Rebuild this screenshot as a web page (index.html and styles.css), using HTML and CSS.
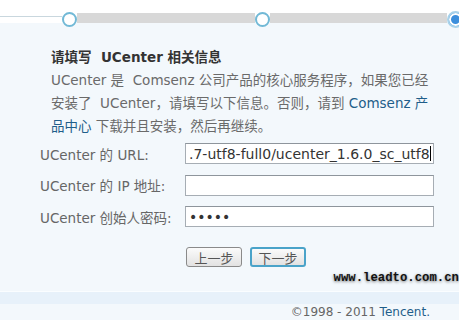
FILE: index.html
```html
<!DOCTYPE html>
<html lang="zh-CN">
<head>
<meta charset="utf-8">
<title>UCenter 设置</title>
<link rel="stylesheet" href="styles.css">
</head>
<body>
<div class="page">
  <div class="header">
    <div class="track">
      <span class="thin"></span>
      <span class="dot"></span>
      <span class="bar"></span>
      <span class="dot"></span>
      <span class="bar"></span>
      <span class="dot dot-current"></span>
    </div>
  </div>

  <div class="intro">
    <div class="title">请填写&nbsp; UCenter 相关信息</div>
    <div class="desc">UCenter 是&nbsp; Comsenz 公司产品的核心服务程序，如果您已经<br>安装了&nbsp; UCenter，请填写以下信息。否则，请到 <a class="link" href="#">Comsenz 产<br>品中心</a> 下载并且安装，然后再继续。</div>
  </div>

  <form class="form">
    <div class="row">
      <label class="label">UCenter 的 URL:</label>
      <div class="field"><input class="input" type="text" value=".7-utf8-full0/ucenter_1.6.0_sc_utf8"><span class="caret"></span></div>
    </div>
    <div class="row">
      <label class="label">UCenter 的 IP 地址:</label>
      <div class="field"><input class="input" type="text" value=""></div>
    </div>
    <div class="row">
      <label class="label">UCenter 创始人密码:</label>
      <div class="field"><input class="input" type="password" value="12345"></div>
    </div>
    <div class="buttons">
      <button class="btn" type="button">上一步</button>
      <button class="btn btn-focus" type="button">下一步</button>
    </div>
  </form>

  <div class="watermark">www.leadto.com.cn</div>

  <div class="footband"></div>
  <div class="footer">©1998 - 2011 <a class="link" href="#">Tencent.</a></div>
</div>
</body>
</html>
```

FILE: styles.css
```css
html, body {
  margin: 0;
  padding: 0;
}
body {
  background: #f3f8fc;
  font-family: "DejaVu Sans", "Noto Sans CJK SC", sans-serif;
  font-size: 13.5px;
  color: #666;
  width: 459px;
  height: 320px;
  overflow: hidden;
}
.page {
  display: flex;
  flex-direction: column;
}
.header {
  background: #fff;
  height: 23px;
  display: flex;
  flex-direction: column;
  justify-content: flex-end;
}
.track {
  height: 10px;
  display: flex;
  align-items: center;
}
.thin {
  width: 62px;
  height: 1px;
  background: #c9d7de;
  align-self: flex-start;
  margin-top: 3px;
  flex: none;
}
.dot {
  width: 11px;
  height: 11px;
  border: 2px solid #72b9d6;
  border-radius: 50%;
  background: #fff;
  flex: none;
  margin-top: 2px;
}
.bar {
  height: 10px;
  background: #d8d8d8;
  flex: none;
  width: 178px;
}
.bar + .dot + .bar {
  width: 177px;
}
.dot-current {
  width: 13px;
  height: 13px;
  background: #3d8fdc;
  border: 2px solid #a8d2ea;
  box-shadow: inset 0 0 0 2px #fff;
}
.intro {
  padding: 23px 0 0 51px;
  line-height: 23px;
}
.title {
  font-weight: bold;
  color: #333;
}
.desc {
  white-space: nowrap;
  color: #6a6a6a;
}
.link {
  color: #1f5e8a;
  text-decoration: none;
}
.form {
  margin: 5px 0 0 40px;
  display: flex;
  flex-direction: column;
  gap: 10.5px;
}
.row {
  display: flex;
  align-items: center;
  height: 21px;
}
.label {
  width: 145px;
  flex: none;
  white-space: nowrap;
}
.field {
  position: relative;
  width: 249px;
  height: 21px;
}
.input {
  box-sizing: border-box;
  width: 249px;
  height: 21px;
  margin: 0;
  border: 1px solid #a6adb4;
  border-top-color: #8e959c;
  background: #fff;
  padding: 0 2px 0 3px;
  font-family: "DejaVu Sans", sans-serif;
  font-size: 14px;
  color: #333;
  outline: none;
}
.caret {
  position: absolute;
  right: 3px;
  top: 3px;
  width: 1px;
  height: 15px;
  background: #000;
}
.buttons {
  display: flex;
  gap: 8px;
  margin: 9.5px 0 0 146px;
}
.btn {
  box-sizing: border-box;
  width: 56px;
  height: 20px;
  margin: 0;
  padding: 0;
  border: 1px solid #8a8a8a;
  border-radius: 3px;
  background: linear-gradient(#fbfbfb, #e2e2e2);
  font-family: "Noto Sans CJK SC", sans-serif;
  font-size: 13px;
  line-height: 17px;
  color: #555;
}
.btn-focus {
  border: 2px solid #4aa3c9;
  line-height: 15px;
}
.watermark {
  align-self: flex-end;
  margin-top: 4px;
  font-family: "Liberation Mono", monospace;
  font-size: 12.3px;
  font-weight: bold;
  line-height: 14px;
  color: #111;
  text-shadow: 0 1px 3px rgba(0, 0, 0, 0.55);
  white-space: nowrap;
}
.footband {
  margin-top: 6px;
  height: 12px;
  border-top: 1px solid #fafdff;
  background: #e7f1fa;
}
.footer {
  align-self: flex-end;
  padding-right: 29px;
  font-size: 12px;
  line-height: 16px;
  color: #666;
}
```
